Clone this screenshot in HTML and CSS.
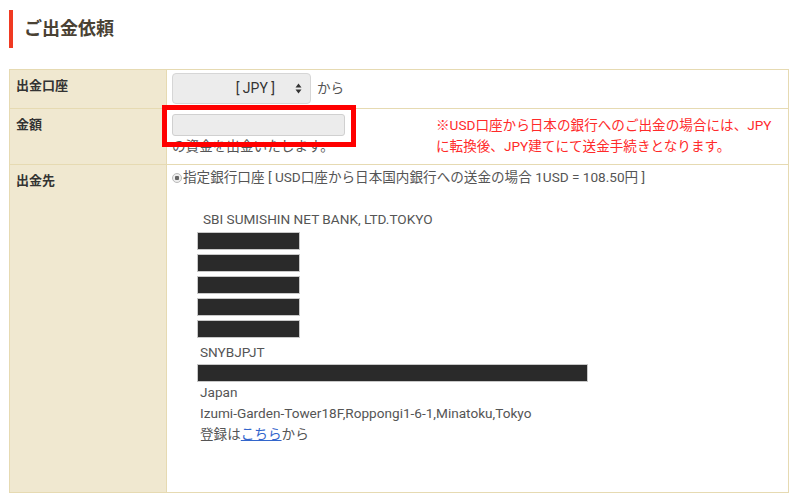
FILE: index.html
```html
<!DOCTYPE html>
<html>
    <head lang="ja">
        <meta charset="UTF-8">
        <title>ご出金依頼</title>
        <link rel="stylesheet" href="styles.css">
    </head>
    <body>
        <div id="page">
            <h2 class="title">ご出金依頼</h2>
            <table class="form">
                <tr class="row-account">
                    <th>出金口座</th>
                    <td>
                        <div class="account">
                            <div class="select">
                                <span>[ JPY ]</span>
                                <svg class="arrow" width="7" height="11" viewBox="0 0 7 11"><path d="M3.5 0.5L6.5 4.5H0.5Z M3.5 10.5L0.5 6.5H6.5Z" fill="#333"/></svg>
                            </div>
                            <span>から</span>
                        </div>
                    </td>
                </tr>
                <tr class="row-amount">
                    <th>金額</th>
                    <td>
                        <div class="amount">
                            <div class="amount-left">
                                <div class="input"></div>
                                <p>の資金を出金いたします。</p>
                                <div class="mark"></div>
                            </div>
                            <p class="note">※USD口座から日本の銀行へのご出金の場合には、JPY<br>に転換後、JPY建てにて送金手続きとなります。</p>
                        </div>
                    </td>
                </tr>
                <tr class="row-dest">
                    <th>出金先</th>
                    <td>
                        <p class="choice"><span class="radio"></span>指定銀行口座 [ USD口座から日本国内銀行への送金の場合 1USD = 108.50円 ]</p>
                        <div class="bank">
                            <p class="bank-name">SBI SUMISHIN NET BANK, LTD.TOKYO</p>
                            <div class="hide short"></div>
                            <div class="hide short"></div>
                            <div class="hide short"></div>
                            <div class="hide short"></div>
                            <div class="hide short"></div>
                            <p>SNYBJPJT</p>
                            <div class="hide long"></div>
                            <p>Japan</p>
                            <p>Izumi-Garden-Tower18F,Roppongi1-6-1,Minatoku,Tokyo</p>
                            <p>登録は<a href="#">こちら</a>から</p>
                        </div>
                    </td>
                </tr>
            </table>
        </div>
    </body>
</html>
```

FILE: styles.css
```css
*{
    margin: 0;
    padding: 0;
}
body{
    font-family: Roboto, "Noto Sans CJK JP", sans-serif;
    font-size: 13.6px;
    line-height: 21px;
    color: #555;
    background: #fff;
}
#page{
    padding: 10px 11px 0 9px;
}
.title{
    height: 38px;
    line-height: 38px;
    border-left: 4px solid #f03a22;
    padding-left: 11px;
    margin-bottom: 21px;
    font-size: 18px;
    font-weight: bold;
    color: #4a4234;
}
.form{
    width: 780px;
    border-collapse: collapse;
    border: 1px solid #e6dab2;
}
.form th,.form td{
    border: 1px solid #e6dab2;
    vertical-align: top;
    text-align: left;
}
.form th{
    width: 144px;
    padding: 5px 6px;
    background: #f0e8d0;
    color: #333;
    font-size: 13px;
    font-weight: bold;
}
.form td{
    padding: 3px 5px;
}
.row-account td{
    height: 32px;
}
.account{
    display: flex;
    align-items: center;
    gap: 6px;
}
.select{
    box-sizing: border-box;
    width: 139px;
    height: 31px;
    border: 1px solid #d6d6d6;
    border-radius: 4px;
    background: #ececec;
    display: flex;
    align-items: center;
    justify-content: flex-end;
    padding-right: 8px;
    color: #333;
    font-size: 14px;
}
.select span{
    margin-right: 20px;
}
.row-amount td{
    height: 47px;
    padding-top: 5px;
}
.amount{
    display: flex;
}
.amount-left{
    width: 264px;
    position: relative;
}
.input{
    width: 171px;
    height: 20px;
    border: 1px solid #d0d0d0;
    border-radius: 3px;
    background: #ececec;
}
.mark{
    position: absolute;
    left: -10px;
    top: -9px;
    width: 194px;
    height: 42px;
    border: 5px solid #ff0000;
    box-sizing: border-box;
}
.note{
    color: #ff2a2a;
    padding-top: 1px;
}
.row-dest td{
    height: 322px;
    padding-top: 2px;
}
.choice{
    display: flex;
    align-items: center;
}
.radio{
    width: 8px;
    height: 8px;
    border: 1px solid #bbb;
    border-radius: 50%;
    background: radial-gradient(circle, #666 0 2px, #eee 2.5px);
    margin-right: 1px;
}
.bank{
    padding: 21px 0 0 25px;
}
.hide{
    height: 16px;
    background: #2a2a2a;
    border: 1px solid #c8c8c8;
}
.short{
    width: 101px;
    margin-bottom: 4px;
}
.long{
    width: 389px;
    margin-top: 1px;
}
.bank p{
    padding-left: 3px;
}
.bank .bank-name{
    padding-left: 6px;
    margin-bottom: 2px;
}
a{
    color: #3366cc;
}
```
